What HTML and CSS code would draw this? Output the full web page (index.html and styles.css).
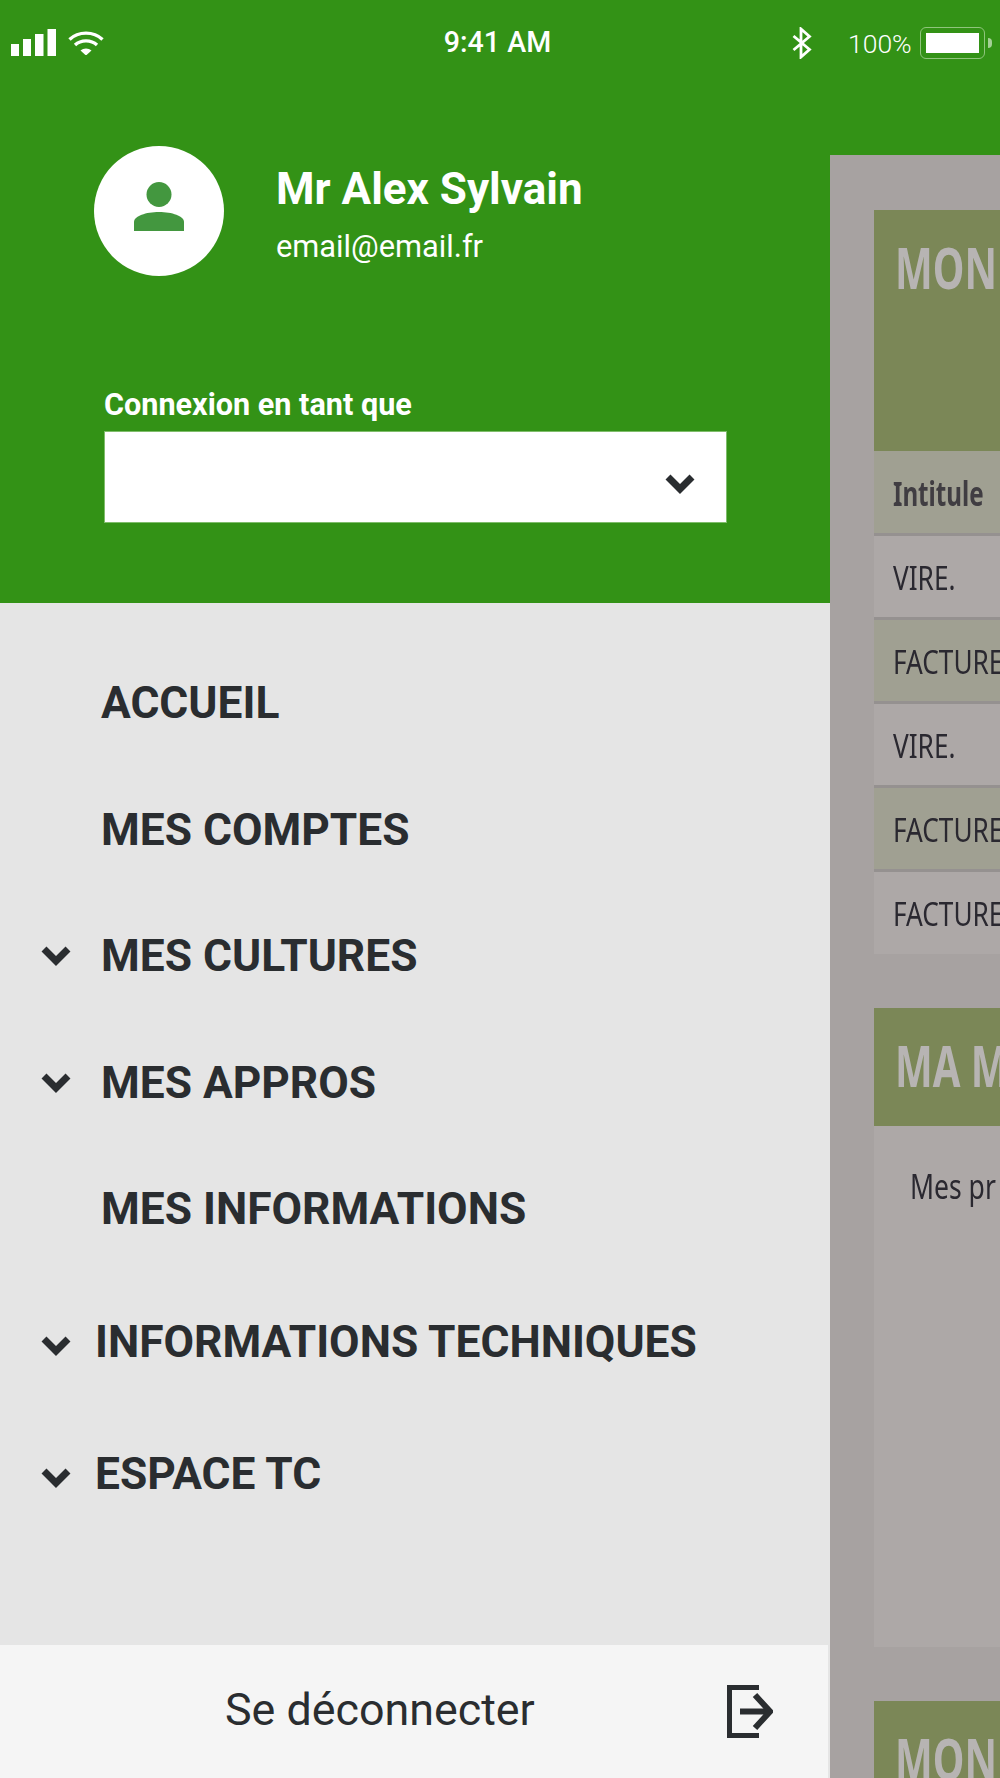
FILE: index.html
```html
<!DOCTYPE html>
<html lang="fr">
<head>
<meta charset="utf-8">
<title>Menu</title>
<link rel="stylesheet" href="styles.css">
</head>
<body>
<div class="shell">
  <div class="status">
    <div class="status-left">
      <svg class="i-signal" viewBox="0 0 45 27"><rect x="0" y="15" width="8" height="12"/><rect x="12" y="10" width="8" height="17"/><rect x="24" y="5" width="8.500" height="22"/><rect x="36.500" y="0" width="8.500" height="27"/></svg>
      <svg class="i-wifi" viewBox="0 0 36 25"><path d="M1.500 9.500C10.500 1 25.500 1 34.500 9.500M7 15C13 9.500 23 9.500 29 15" fill="none" stroke="#fff" stroke-width="3.400"/><path d="M12.500 20.500C15.500 17.800 20.500 17.800 23.500 20.500L18 25.500Z" fill="#fff"/></svg>
    </div>
    <div class="status-time">9:41 AM</div>
    <div class="status-right">
      <svg class="i-bt" viewBox="0 0 20 32"><path d="M1.500 9L17.500 22.500L9 30V2L17.500 9.500L1.500 23" fill="none" stroke="#fff" stroke-width="2.800"/></svg>
      <span class="battery-pct">100%</span>
      <div class="battery"><div class="battery-fill"></div></div>
      <div class="battery-nub"></div>
    </div>
  </div>

  <aside class="drawer">
    <header class="drawer-head">
      <div class="user">
        <div class="avatar">
          <svg class="i-person" viewBox="0 0 50 49"><circle cx="25" cy="12.500" r="12.500"/><path d="M0 49V40C0 34 12 30 25 30S50 34 50 40V49Z"/></svg>
        </div>
        <div class="user-text">
          <div class="user-name">Mr Alex Sylvain</div>
          <div class="user-mail">email@email.fr</div>
        </div>
      </div>
      <div class="login-as">
        <div class="login-label">Connexion en tant que</div>
        <div class="select">
          <svg class="i-chev" viewBox="0 0 30 20"><path d="M3 3L15 15L27 3" fill="none" stroke="#2a2d30" stroke-width="7"/></svg>
        </div>
      </div>
    </header>
    <nav class="nav">
      <div class="nav-item"><span class="nav-label">ACCUEIL</span></div>
      <div class="nav-item"><span class="nav-label">MES COMPTES</span></div>
      <div class="nav-item has-sub"><svg class="i-chev" viewBox="0 0 30 20"><path d="M3 3L15 15L27 3" fill="none" stroke="#2a2d30" stroke-width="7"/></svg><span class="nav-label">MES CULTURES</span></div>
      <div class="nav-item has-sub"><svg class="i-chev" viewBox="0 0 30 20"><path d="M3 3L15 15L27 3" fill="none" stroke="#2a2d30" stroke-width="7"/></svg><span class="nav-label">MES APPROS</span></div>
      <div class="nav-item"><span class="nav-label">MES INFORMATIONS</span></div>
      <div class="nav-item has-sub tall"><svg class="i-chev" viewBox="0 0 30 20"><path d="M3 3L15 15L27 3" fill="none" stroke="#2a2d30" stroke-width="7"/></svg><span class="nav-label">INFORMATIONS TECHNIQUES</span></div>
      <div class="nav-item has-sub tall"><svg class="i-chev" viewBox="0 0 30 20"><path d="M3 3L15 15L27 3" fill="none" stroke="#2a2d30" stroke-width="7"/></svg><span class="nav-label">ESPACE TC</span></div>
    </nav>
    <footer class="logout">
      <span class="logout-label">Se déconnecter</span>
      <svg class="i-logout" viewBox="0 0 46 53"><path d="M32 2.500H2.500V50.500H32" fill="none" stroke="#2a2d30" stroke-width="5"/><path d="M13 26.500H41" fill="none" stroke="#2a2d30" stroke-width="6"/><path d="M28 10L43 26.500L28 43" fill="none" stroke="#2a2d30" stroke-width="6"/></svg>
    </footer>
  </aside>

  <main class="page">
    <div class="page-top"></div>
    <div class="page-body">
      <section class="card">
        <h2 class="card-title tall-title"><span class="squeeze-title">MON</span></h2>
        <div class="row row-head"><span class="squeeze">Intitule</span></div>
        <div class="row"><span class="squeeze">VIRE.</span></div>
        <div class="row row-alt"><span class="squeeze">FACTURE</span></div>
        <div class="row"><span class="squeeze">VIRE.</span></div>
        <div class="row row-alt"><span class="squeeze">FACTURE</span></div>
        <div class="row row-last"><span class="squeeze">FACTURE</span></div>
      </section>
      <section class="card card-2">
        <h2 class="card-title"><span class="squeeze-title">MA M</span></h2>
        <div class="card-text"><span class="squeeze">Mes pr</span></div>
      </section>
      <section class="card">
        <h2 class="card-title"><span class="squeeze-title">MON</span></h2>
      </section>
    </div>
  </main>
</div>
</body>
</html>
```

FILE: styles.css
```css
* { box-sizing: border-box; }
html, body { margin: 0; padding: 0; }
body { width: 1000px; height: 1778px; overflow: hidden; background: #339216; font-family: Roboto, "Liberation Sans", sans-serif; }

.shell { position: relative; display: flex; width: 1000px; height: 1778px; overflow: hidden; }

/* status bar lies over the drawer and the page */
.status { position: absolute; z-index: 2; left: 0; top: 0; width: 1000px; height: 84px; color: #fff; }
.status-left { position: absolute; left: 11px; top: 29px; display: flex; gap: 12px; align-items: flex-start; }
.i-signal { width: 45px; height: 27px; fill: #fff; display: block; }
.i-wifi { width: 36px; height: 25px; display: block; margin-top: 1px; }
.status-time { position: absolute; left: 0; right: 5px; top: 25px; text-align: center; font-size: 28.600px; font-weight: 500; line-height: 34px; }
.status-right { position: absolute; left: 790px; top: 27px; display: flex; align-items: flex-start; }
.i-bt { width: 20px; height: 32px; display: block; margin: 0 0 0 2px; }
.battery-pct { margin-left: 36px; font-size: 26.500px; font-weight: 300; line-height: 34px; }
.battery { width: 65px; height: 32px; margin-left: 8px; padding: 5px; border: 1px solid #8fc57c; border-radius: 6px; }
.battery-fill { height: 100%; background: #fff; }
.battery-nub { width: 4px; height: 10px; margin: 11px 0 0 3px; background: #a5d096; border-radius: 0 5px 5px 0; }

/* drawer */
.drawer { position: relative; z-index: 1; width: 830px; flex: none; height: 1778px; display: flex; flex-direction: column; background: #e5e5e5; }
.drawer-head { height: 603px; flex: none; background: #339216; padding: 146px 0 0 94px; color: #fff; }
.user { display: flex; align-items: flex-start; }
.avatar { width: 130px; height: 130px; border-radius: 50%; background: #fff; display: flex; align-items: center; justify-content: center; }
.i-person { width: 50px; height: 49px; fill: #43973f; display: block; margin-bottom: 9px; }
.user-text { margin-left: 52px; padding-top: 18px; }
.user-name { font-size: 44px; font-weight: 700; line-height: 50px; white-space: nowrap; }
.user-mail { font-size: 30.800px; line-height: 36px; margin-top: 15px; white-space: nowrap; }
.login-as { margin: 112px 0 0 10px; width: 623px; }
.login-label { font-size: 30.600px; font-weight: 700; line-height: 34px; white-space: nowrap; }
.select { height: 92px; margin-top: 9px; background: #fff; border: 1px solid #7fbd6b; display: flex; align-items: center; justify-content: flex-end; padding: 0 30px 0 0; }
.select .i-chev { margin: 14px 1px 0 0; }

.nav { flex: 1; padding-top: 37px; }
.nav-item { height: 126.500px; display: flex; align-items: center; padding-left: 101px; color: #2a2d30; }
.nav-item.has-sub { padding-left: 41px; }
.nav-item.tall { height: 132px; }
.nav-item.tall:nth-child(6) { margin-top: 3px; }
.nav-label { font-size: 44.300px; font-weight: 700; line-height: 50px; white-space: nowrap; }
.i-chev { width: 30px; height: 20px; display: block; flex: none; margin-right: 30px; }
.nav-item.tall .i-chev { margin-right: 24px; margin-top: 8px; }

.logout { height: 133px; flex: none; margin-right: 2px; background: #f5f5f5; display: flex; align-items: center; padding: 0 0 4px 225px; }
.logout-label { font-size: 44.800px; line-height: 50px; color: #2a2d30; white-space: nowrap; }
.i-logout { width: 46px; height: 53px; display: block; margin: 4px 0 0 192px; }

/* dimmed page behind the drawer */
.page { width: 170px; flex: none; height: 1778px; display: flex; flex-direction: column; }
.page-top { height: 155px; flex: none; background: #339216; }
.page-body { flex: 1; min-height: 0; overflow: hidden; background: #a7a2a1; padding: 55px 0 0 44px; display: flex; flex-direction: column; gap: 54px; filter: blur(.4px); }
.card { background: #ada8a7; flex: none; width: 126px; overflow: hidden; white-space: nowrap; font-family: "Noto Sans", "Liberation Sans", sans-serif; }
.squeeze, .squeeze-title { display: inline-block; transform-origin: left center; }
.squeeze { transform: scaleX(.78); }
.squeeze-title { transform: scaleX(.69); }
.card-title { margin: 0; height: 118px; padding: 26px 0 0 21px; background: #7b8757; color: #b7b4b3; font-size: 58px; line-height: 62px; font-weight: 700; }
.tall-title { height: 241px; }
.row { height: 84px; padding-left: 19px; display: flex; align-items: center; color: #2a2830; font-size: 33.600px; border-bottom: 3px solid #959190; }
.row-head { height: 85px; padding-top: 2px; background: #a0a092; font-weight: 700; color: #403d42; }
.row-head .squeeze { transform: scaleX(.72); }
.row-alt { background: #a0a092; }
.row-last { height: 82px; border-bottom: 0; }
.card-2 { height: 639px; }
.card-text { padding: 39px 0 0 36px; color: #2a2830; font-size: 34px; line-height: 42px; }
```
